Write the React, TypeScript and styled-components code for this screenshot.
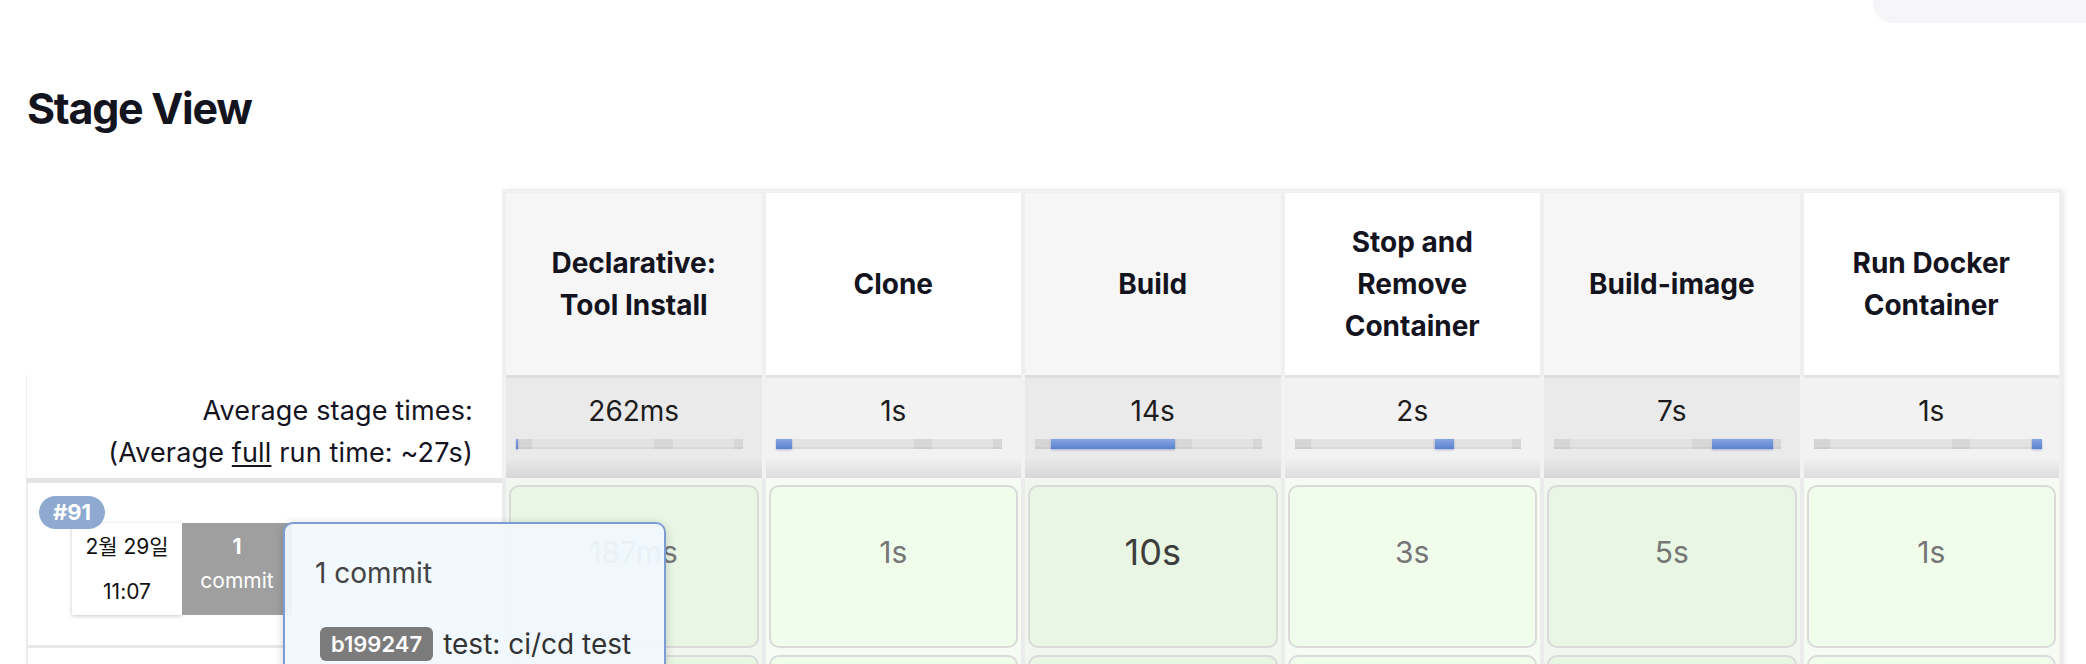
import React from 'react';
import styled, { createGlobalStyle } from 'styled-components';

const GlobalStyle = createGlobalStyle`
  html, body {
    margin: 0;
    padding: 0;
    background: #ffffff;
    overflow: hidden;
  }
  body {
    font-family: Inter, "Noto Sans", "Noto Sans CJK KR", sans-serif;
    color: #14141f;
  }
`;

type Stage = {
  name: string;
  avg: string;
  barLeft: number;
  barWidth: number;
  run: string;
  strong?: boolean;
};

const stages: Stage[] = [
  { name: 'Declarative: Tool Install', avg: '262ms', barLeft: 0, barWidth: 2, run: '187ms' },
  { name: 'Clone', avg: '1s', barLeft: 0, barWidth: 16, run: '1s' },
  { name: 'Build', avg: '14s', barLeft: 16, barWidth: 124, run: '10s', strong: true },
  { name: 'Stop and Remove Container', avg: '2s', barLeft: 140, barWidth: 19, run: '3s' },
  { name: 'Build-image', avg: '7s', barLeft: 158, barWidth: 61, run: '5s' },
  { name: 'Run Docker Container', avg: '1s', barLeft: 218, barWidth: 10, run: '1s' },
];

const TopStrip = styled.div`
  display: flex;
  justify-content: flex-end;
  height: 23px;
`;

const TopTab = styled.div`
  width: 213px;
  height: 23px;
  background: #f6f6f8;
  border-bottom-left-radius: 20px;
`;

const Page = styled.main`
  padding: 0 0 0 26px;
`;

const Title = styled.h2`
  margin: 59px 0 55px 1px;
  font-size: 43px;
  line-height: 52px;
  font-weight: 700;
  letter-spacing: -1.3px;
  color: #14141f;
`;

const Table = styled.div`
  display: flex;
  align-items: flex-start;
`;

const LabelColumn = styled.div`
  position: relative;
  z-index: 2;
  width: 476px;
  display: flex;
  flex-direction: column;
`;

const Corner = styled.div`
  height: 186px;
`;

const AvgLabel = styled.div`
  box-sizing: border-box;
  height: 108px;
  padding: 15px 29px 0 0;
  text-align: right;
  font-size: 27px;
  letter-spacing: 0.15px;
  line-height: 42px;
  color: #14141f;
  border-left: 1px solid #f0f0f0;
  border-bottom: 5px solid #e4e4e4;

  u {
    text-decoration-thickness: 2px;
    text-underline-offset: 3px;
  }
`;

const BuildLabel = styled.div`
  position: relative;
  box-sizing: border-box;
  height: 165px;
  padding: 40px 0 0 44px;
  display: flex;
  align-items: flex-start;
  border-left: 2px solid #ececec;
  border-bottom: 3px solid #e8e8e8;
`;

const NextLabel = styled.div`
  height: 120px;
  border-left: 2px solid #ececec;
`;

const BuildBadge = styled.span`
  position: absolute;
  left: 11px;
  top: 13px;
  z-index: 1;
  height: 33px;
  padding: 0 14px;
  border-radius: 17px;
  background: #8eaad1;
  color: #ffffff;
  font-size: 22px;
  font-weight: 700;
  line-height: 33px;
`;

const DateBox = styled.div`
  box-sizing: border-box;
  width: 110px;
  height: 92px;
  padding-top: 1px;
  background: #ffffff;
  box-shadow: 0 1px 4px rgba(0, 0, 0, 0.22);
  text-align: center;
  font-size: 21px;
  line-height: 45px;
  color: #111111;
`;

const CommitBox = styled.div`
  box-sizing: border-box;
  width: 110px;
  height: 92px;
  padding-top: 7px;
  background: #9f9f9f;
  text-align: center;
  color: #ffffff;
  font-size: 21px;
  line-height: 34px;

  b {
    display: block;
    font-weight: 700;
  }
`;

const Popover = styled.div`
  position: absolute;
  left: 255px;
  top: 39px;
  box-sizing: border-box;
  width: 383px;
  height: 240px;
  padding: 28px 30px;
  border: 2px solid #7c9dd3;
  border-radius: 10px;
  background: rgba(240, 248, 254, 0.94);
  box-shadow: 0 2px 10px rgba(0, 0, 0, 0.18);
`;

const PopoverTitle = styled.div`
  font-size: 28px;
  line-height: 42px;
  color: #444444;
`;

const CommitRow = styled.div`
  margin-top: 33px;
  display: flex;
  align-items: center;
  gap: 10px;
  font-size: 28px;
  color: #333333;
`;

const Hash = styled.span`
  margin-left: 5px;
  height: 34px;
  padding: 0 11px;
  border-radius: 6px;
  background: #7b7b7b;
  color: #ffffff;
  font-size: 22px;
  font-weight: 600;
  line-height: 34px;
`;

const StageGrid = styled.div`
  box-sizing: border-box;
  width: 1560px;
  display: grid;
  grid-template-columns: repeat(6, 1fr);
  grid-template-rows: 182px 103px 170px 170px;
  border-top: 4px solid #f0f0f2;
  border-right: 3px solid #efefef;
  box-shadow: 3px 0 6px -2px rgba(0, 0, 0, 0.14);
`;

const HeadCell = styled.div<{ $shade: boolean }>`
  box-sizing: border-box;
  display: flex;
  align-items: center;
  justify-content: center;
  padding: 0 22px;
  border-left: 4px solid #efefef;
  background: ${(p) => (p.$shade ? '#f6f6f6' : '#ffffff')};
  text-align: center;
  font-size: 28px;
  line-height: 42px;
  font-weight: 700;
  color: #14141f;
`;

const AvgCell = styled.div<{ $shade: boolean }>`
  box-sizing: border-box;
  padding-top: 15px;
  border-left: 4px solid #f2f2f2;
  background: ${(p) =>
    p.$shade
      ? 'linear-gradient(to bottom, #dddddd 0, #dddddd 3px, #eaeaea 3px, #eaeaea 80%, #d7d7d7 100%)'
      : 'linear-gradient(to bottom, #e4e4e4 0, #e4e4e4 3px, #f2f2f2 3px, #f2f2f2 80%, #dddddd 100%)'};
  text-align: center;
  font-size: 28px;
  line-height: 42px;
  color: #1c1c1c;
`;

const Bar = styled.div`
  position: relative;
  height: 10px;
  margin: 7px 19px 0 10px;
  background: linear-gradient(
    to right,
    #d5d5d5 0,
    #d5d5d5 7%,
    #e2e2e2 7%,
    #e2e2e2 61%,
    #d7d7d7 61%,
    #d7d7d7 69%,
    #e2e2e2 69%,
    #e2e2e2 96%,
    #d7d7d7 96%
  );
  box-shadow: inset 0 -2px 0 rgba(0, 0, 0, 0.04);
`;

const BarFill = styled.div`
  position: absolute;
  top: 0;
  bottom: 0;
  background: linear-gradient(to bottom, #86a6e4, #5b82cf);
  box-shadow: 0 1px 2px rgba(40, 70, 140, 0.35);
`;

const RunCell = styled.div<{ $shade: boolean }>`
  box-sizing: border-box;
  padding: 7px 3px 0;
  border-left: 4px solid #ececec;
  background: ${(p) => (p.$shade ? '#f1f6ef' : '#f6fbf4')};
`;

const RunBox = styled.div<{ $shade: boolean; $strong?: boolean }>`
  box-sizing: border-box;
  height: 163px;
  padding-top: 44px;
  border: 2px solid #dadada;
  border-radius: 10px;
  background: ${(p) => (p.$shade ? '#e8f6e3' : '#f0fdeb')};
  text-align: center;
  line-height: 42px;
  font-size: ${(p) => (p.$strong ? '36px' : '30px')};
  color: ${(p) => (p.$strong ? '#3d3d3d' : '#767676')};
`;

const App: React.FC = () => {
  return (
    <>
      <GlobalStyle />
      <TopStrip>
        <TopTab />
      </TopStrip>
      <Page>
        <Title>Stage View</Title>
        <Table>
          <LabelColumn>
            <Corner />
            <AvgLabel>
              Average stage times:
              <br />
              (Average <u>full</u> run time: ~27s)
            </AvgLabel>
            <BuildLabel>
              <BuildBadge>#91</BuildBadge>
              <DateBox>
                2월 29일
                <br />
                11:07
              </DateBox>
              <CommitBox>
                <b>1</b>
                commit
              </CommitBox>
              <Popover>
                <PopoverTitle>1 commit</PopoverTitle>
                <CommitRow>
                  <Hash>b199247</Hash>
                  test: ci/cd test
                </CommitRow>
              </Popover>
            </BuildLabel>
            <NextLabel />
          </LabelColumn>
          <StageGrid>
            {stages.map((s, i) => (
              <HeadCell key={`h${i}`} $shade={i % 2 === 0}>
                {s.name}
              </HeadCell>
            ))}
            {stages.map((s, i) => (
              <AvgCell key={`a${i}`} $shade={i % 2 === 0}>
                {s.avg}
                <Bar>
                  <BarFill style={{ left: s.barLeft, width: s.barWidth }} />
                </Bar>
              </AvgCell>
            ))}
            {stages.map((s, i) => (
              <RunCell key={`r${i}`} $shade={i % 2 === 0}>
                <RunBox $shade={i % 2 === 0} $strong={s.strong}>
                  {s.run}
                </RunBox>
              </RunCell>
            ))}
            {stages.map((s, i) => (
              <RunCell key={`n${i}`} $shade={i % 2 === 0}>
                <RunBox $shade={i % 2 === 0} />
              </RunCell>
            ))}
          </StageGrid>
        </Table>
      </Page>
    </>
  );
};

export default App;
